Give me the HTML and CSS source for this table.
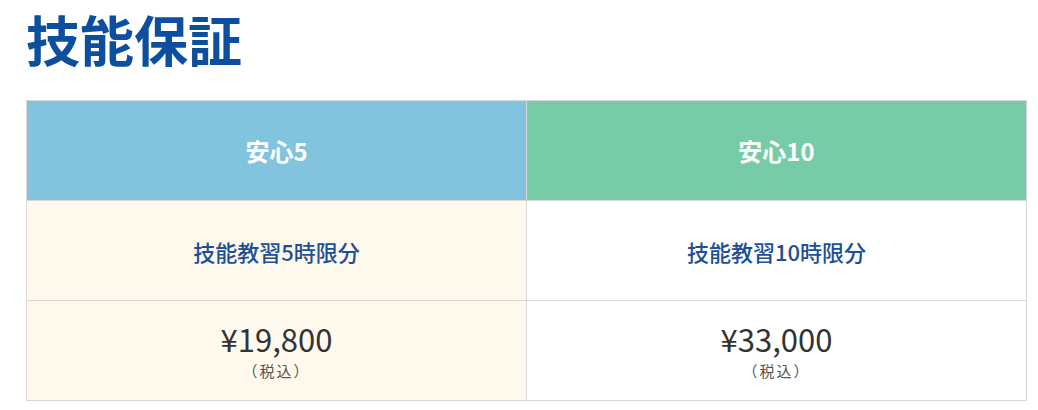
FILE: index.html
```html
<!DOCTYPE html>
<html lang="ja">
<head>
<meta charset="utf-8">
<link rel="stylesheet" href="styles.css">
</head>
<body>
<h1 class="title">技能保証</h1>
<table class="plan">
  <tr>
    <th class="h-blue">安心5</th>
    <th class="h-green">安心10</th>
  </tr>
  <tr>
    <td class="cream desc">技能教習5時限分</td>
    <td class="desc">技能教習10時限分</td>
  </tr>
  <tr>
    <td class="cream price"><span class="amt">¥19,800</span><span class="tax">（税込）</span></td>
    <td class="price"><span class="amt">¥33,000</span><span class="tax">（税込）</span></td>
  </tr>
</table>
</body>
</html>
```
FILE: styles.css
```css
html, body {
  margin: 0;
  padding: 0;
  background: #fff;
}
body {
  padding: 0 12px 0 26px;
  font-family: "Noto Sans CJK JP", "Noto Sans", sans-serif;
}
.title {
  margin: 0 0 22px;
  font-size: 54px;
  line-height: 78px;
  font-weight: 700;
  color: #0c4f9e;
}
.plan {
  width: 1001px;
  border-collapse: collapse;
  table-layout: fixed;
}
.plan th, .plan td {
  border: 1px solid #d8d8d8;
  text-align: center;
  vertical-align: middle;
  height: 99px;
  padding: 0;
}
.plan th {
  color: #fff;
  font-size: 24px;
  font-weight: 700;
}
.h-blue { background: #82c4de; }
.h-green { background: #77cca7; }
.cream { background: #fef9ec; }
.desc {
  color: #1d4f95;
  font-size: 22px;
  font-weight: 500;
}
.price .amt {
  display: block;
  font-size: 31px;
  line-height: 36px;
  color: #333;
  font-weight: 400;
}
.price .tax {
  display: block;
  margin-top: 4px;
  font-size: 15px;
  line-height: 20px;
  color: #555;
  letter-spacing: 2px;
}
```
